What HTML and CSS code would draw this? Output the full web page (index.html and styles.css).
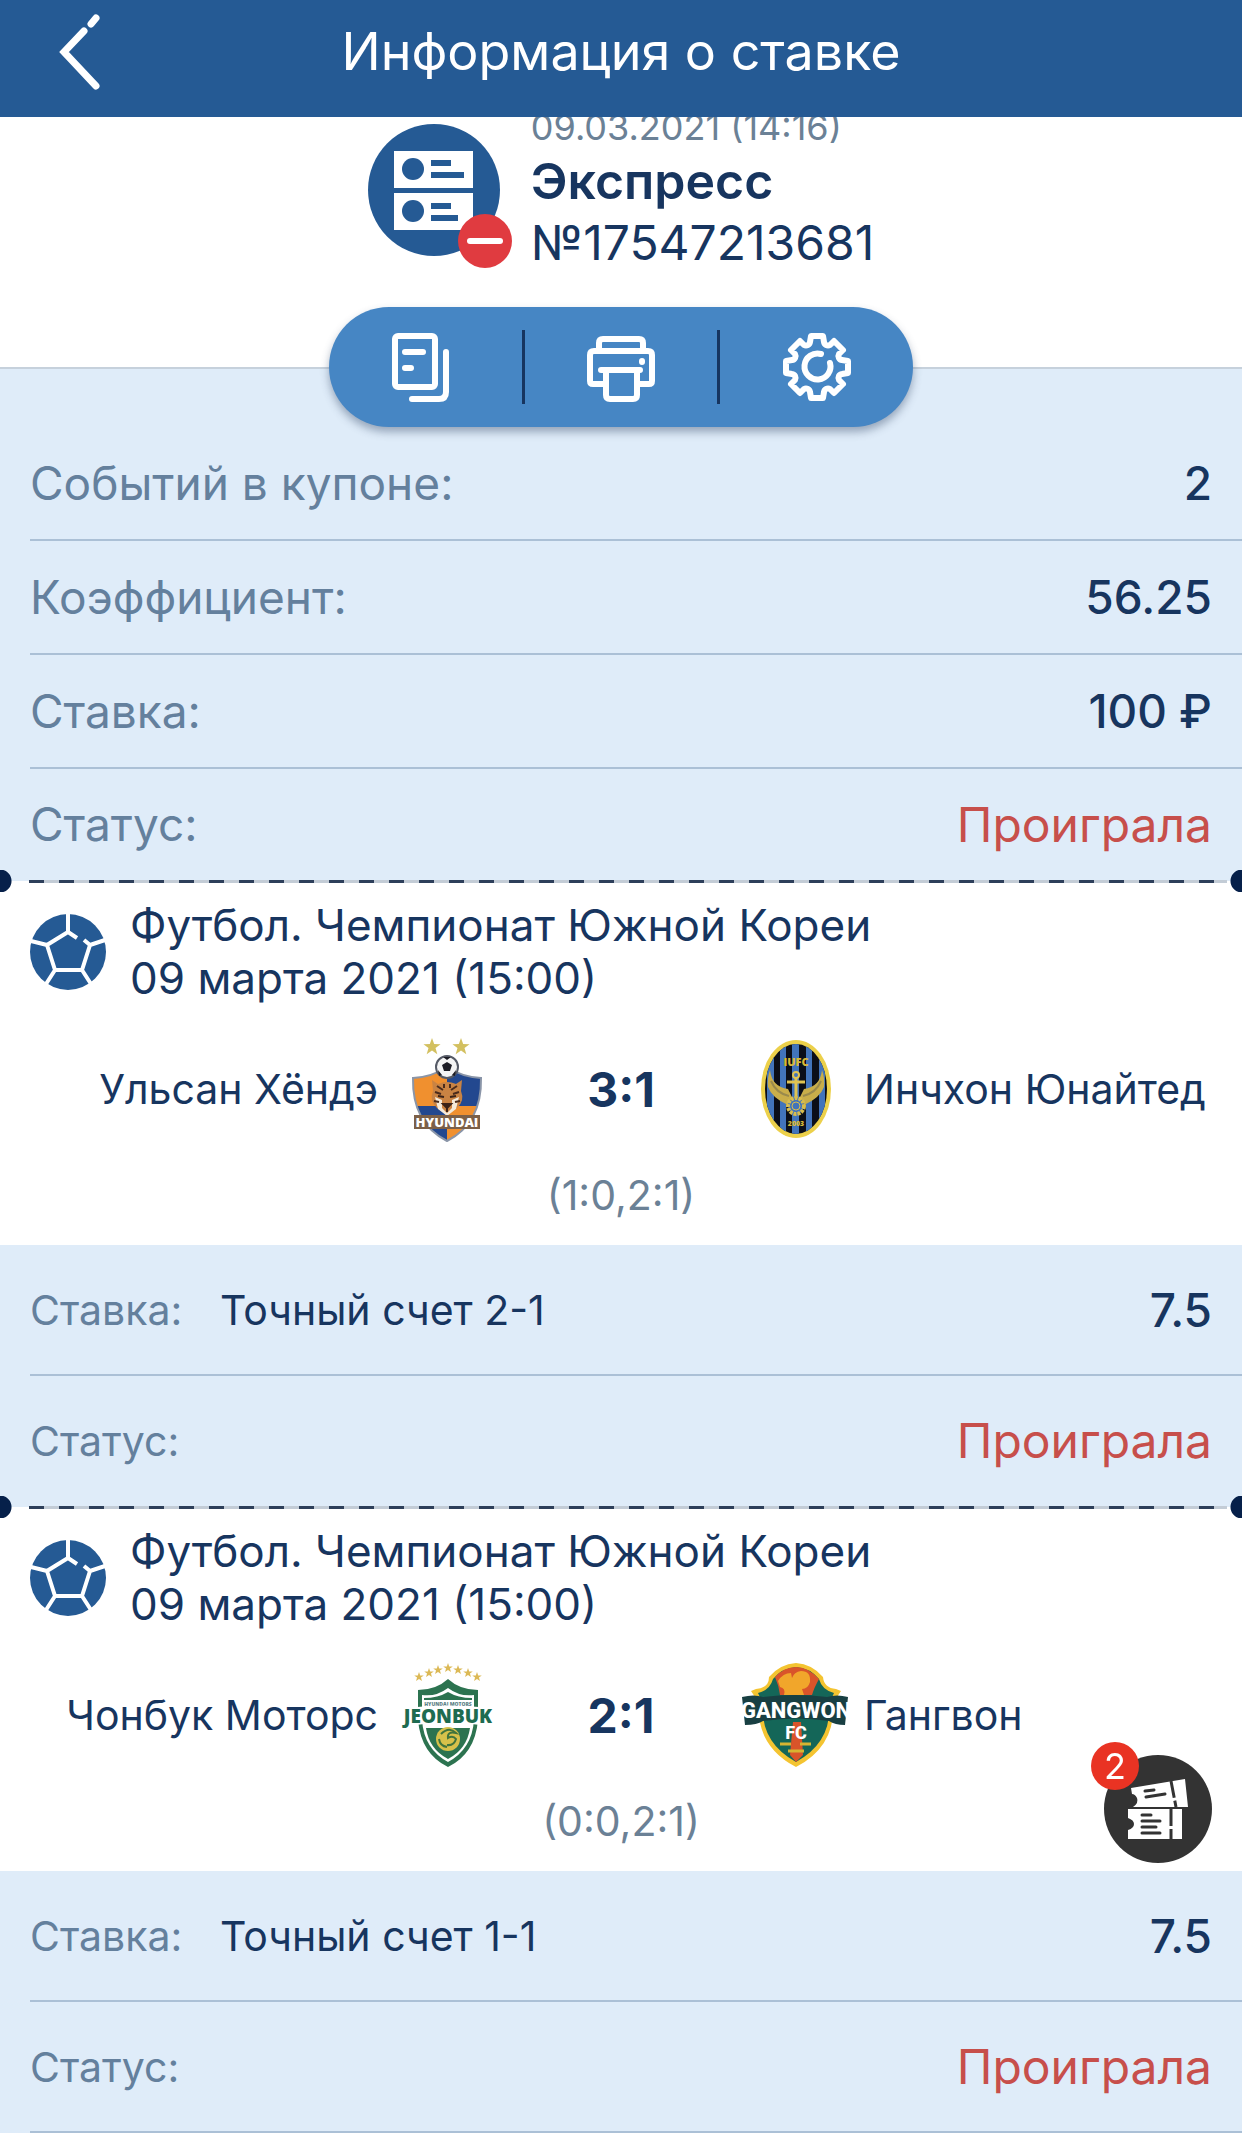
FILE: index.html
```html
<!DOCTYPE html>
<html lang="ru">
<head>
    <meta charset="UTF-8">
    <meta name="viewport" content="width=device-width, initial-scale=1.0">
    <title>Информация о ставке</title>
    <link rel="stylesheet" href="styles.css">
</head>
<body>
    <svg class="sprite" aria-hidden="true">
        <symbol id="ball" viewBox="0 0 76 76">
            <circle cx="38" cy="38" r="38" fill="#255a94"/>
            <g fill="none" stroke="#fff" stroke-width="4">
                <path d="M38 0v18M38 18L17 31l8 25h27l8-25-6-5M38 18l9 6M17 31L1 27M60 31l15-5M25 56L16 70M52 56l9 14"/>
            </g>
        </symbol>
        <symbol id="star" viewBox="-10 -10 20 20">
            <path d="M0-10L2.4-3.2 9.5-3.1 3.9 1.2 5.9 8.1 0 4-5.9 8.1-3.9 1.2-9.5-3.1-2.4-3.2z"/>
        </symbol>
    </svg>

    <header class="header">
        <a href="#" class="back" aria-label="Назад">
            <svg width="44" height="77" viewBox="0 0 44 77" fill="none" stroke="#fff" stroke-width="7" stroke-linecap="round">
                <path d="M39 4l-5 6M27 17L7 38l32 34"/>
            </svg>
        </a>
        <h1>Информация о ставке</h1>
    </header>

    <main>
        <section class="coupon">
            <div class="coupon-info">
                <svg class="coupon-icon" width="145" height="146" viewBox="0 0 145 146">
                    <circle cx="66" cy="66" r="66" fill="#255a94"/>
                    <path d="M26 27h79v37H26zM26 69h79v37H26z" fill="#fff"/>
                    <circle cx="45" cy="45" r="11" fill="#255a94"/>
                    <circle cx="45" cy="87" r="11" fill="#255a94"/>
                    <path d="M63 36h20v6H63zM63 48h33v6H63zM63 79h20v6H63zM63 91h27v6H63z" fill="#255a94"/>
                    <circle cx="117" cy="117" r="27" fill="#e03b40"/>
                    <path d="M102 117h30" stroke="#fff" stroke-width="6" stroke-linecap="round"/>
                </svg>
                <div>
                    <p class="date">09.03.2021 (14:16)</p>
                    <h2>Экспресс</h2>
                    <p class="number">№17547213681</p>
                </div>
            </div>
            <div class="toolbar">
                <button type="button" aria-label="Копировать">
                    <svg width="68" height="70" viewBox="0 0 68 70" fill="none" stroke="#fff" stroke-width="6" stroke-linecap="round" stroke-linejoin="round">
                        <rect x="4" y="4" width="40" height="51" rx="3"/>
                        <path d="M14 20h18M14 36h6M55 20v40q0 7-7 7H21"/>
                    </svg>
                </button>
                <button type="button" aria-label="Печать">
                    <svg width="68" height="70" viewBox="0 0 68 70" fill="none" stroke="#fff" stroke-width="6" stroke-linecap="round" stroke-linejoin="round">
                        <path d="M12 19V11q0-4 4-4h36q4 0 4 4v8M18 52H6q-3 0-3-3V23q0-4 4-4h54q4 0 4 4v26q0 3-3 3H50M14 38h39M19 39v24q0 4 4 4h23q4 0 4-4V39"/>
                        <path d="M55 29v1"/>
                    </svg>
                </button>
                <button type="button" aria-label="Настройки">
                    <svg width="68" height="70" viewBox="-34 -35 68 70" fill="none" stroke="#fff" stroke-width="6" stroke-linecap="round" stroke-linejoin="round">
                        <path d="M-7-25L-6-31H6L7-25A4 4 0 0 0 13-22L17-26 26-17 22-13A4 4 0 0 0 25-7L31-6V6L25 7A4 4 0 0 0 22 13L26 17 17 26 13 22A4 4 0 0 0 7 25L6 31H-6L-7 25A4 4 0 0 0-13 22L-17 26-26 17-22 13A4 4 0 0 0-25 7L-31 6V-6L-25-7A4 4 0 0 0-22-13L-26-17-17-26-13-22A4 4 0 0 0-7-25z"/>
                        <path d="M4-13A13 13 0 1 0 13-4"/>
                    </svg>
                </button>
            </div>
        </section>

        <dl class="summary">
            <div class="row">
                <dt>Событий в купоне:</dt>
                <dd>2</dd>
            </div>
            <div class="row">
                <dt>Коэффициент:</dt>
                <dd>56.25</dd>
            </div>
            <div class="row">
                <dt>Ставка:</dt>
                <dd>100 ₽</dd>
            </div>
            <div class="row">
                <dt>Статус:</dt>
                <dd class="lost">Проиграла</dd>
            </div>
        </dl>

        <hr class="cut">

        <section class="event">
            <div class="event-head">
                <svg width="76" height="76"><use href="#ball"/></svg>
                <p>Футбол. Чемпионат Южной Кореи<br>09 марта 2021 (15:00)</p>
            </div>
            <div class="match">
                <span class="home">Ульсан Хёндэ</span>
                <svg width="110" height="110" viewBox="0 -2 110 110">
                    <g fill="#d3c060">
                        <use href="#star" x="31" y="2" width="18" height="18"/>
                        <use href="#star" x="60" y="2" width="18" height="18"/>
                    </g>
                    <clipPath id="ulsan"><path d="M21 42Q40 41 55 31 70 41 89 42 90 87 55 105 20 87 21 42z"/></clipPath>
                    <g clip-path="url(#ulsan)">
                        <path d="M20 30h35v40H20zM55 70h36v36H55z" fill="#f0902f"/>
                        <path d="M55 30h36v40H55zM20 70h35v36H20z" fill="#23488f"/>
                    </g>
                    <path d="M21 42Q40 41 55 31 70 41 89 42 90 87 55 105 20 87 21 42z" fill="none" stroke="#8a95a8" stroke-width="2"/>
                    <circle cx="55" cy="31" r="11" fill="#f4f4f4" stroke="#555a66" stroke-width="2"/>
                    <path d="M55 26l5 3-2 6h-6l-2-6zM46 34l4 5-3 1zM64 34l-4 5 3 1zM51 21h8l-4 3z" fill="#1c1c24"/>
                    <path d="M40 44l6 4q9-4 18 0l6-4-1 11q4 10-4 17l-10 7-10-7q-8-7-4-17z" fill="#c98343"/>
                    <path d="M43 61l7 3v8l5 5 5-5v-8l7-3-3 12-9 7-9-7z" fill="#f5ead9"/>
                    <path d="M45 50l6 4M65 50l-6 4M43 56l6 2M67 56l-6 2M52 48v4M58 48v4M42 65l5 1M68 65l-5 1" stroke="#4a2b1c" stroke-width="2"/>
                    <path d="M46 60l6 1M64 60l-6 1M51 68h8l-4 4zM55 72v4" stroke="#3b2318" stroke-width="2" fill="#3b2318"/>
                    <path d="M22 79h66v14H22z" fill="#7c6048"/>
                    <text x="55" y="91" class="logo-text" font-size="13" fill="#fff">HYUNDAI</text>
                </svg>
                <strong class="score">3:1</strong>
                <svg width="110" height="110" viewBox="0 -2 110 110">
                    <clipPath id="incheon"><ellipse cx="56" cy="53" rx="31" ry="45"/></clipPath>
                    <ellipse cx="56" cy="53" rx="35" ry="49" fill="#ecd04a"/>
                    <g clip-path="url(#incheon)">
                        <path d="M20 0h72v110H20z" fill="#0b0e18"/>
                        <path d="M27 0h7v110h-7zM40 0h6v110h-6zM52 0h7v110h-7zM66 0h6v110h-6zM79 0h6v110h-6z" fill="#4274bb"/>
                    </g>
                    <path d="M30 34q2 17 18 19l5 10-5 6q-16-7-20-18-1-9 2-17zM82 34q-2 17-18 19l-5 10 5 6q16-7 20-18 1-9-2-17z" fill="#c9ae4a"/>
                    <path d="M31 45q5 12 18 15M81 45q-5 12-18 15" fill="none" stroke="#9a8a4c" stroke-width="2"/>
                    <circle cx="56" cy="39" r="3" fill="none" stroke="#e0c452" stroke-width="2"/>
                    <path d="M56 42v22M47 46h18" stroke="#e0c452" stroke-width="3"/>
                    <circle cx="56" cy="70" r="8" fill="#4274bb" stroke="#d8bd4e" stroke-width="4" stroke-dasharray="3 1"/>
                    <circle cx="56" cy="70" r="4" fill="none" stroke="#d8bd4e"/>
                    <text x="56" y="30" class="logo-text" font-size="11" fill="#d9b936">IUFC</text>
                    <text x="56" y="90" class="logo-text" font-size="7" fill="#d9b936">2003</text>
                </svg>
                <span>Инчхон Юнайтед</span>
            </div>
            <p class="periods">(1:0,2:1)</p>
        </section>

        <dl class="bet">
            <div class="row">
                <dt>Ставка:</dt>
                <dd class="pick">Точный счет 2-1</dd>
                <dd>7.5</dd>
            </div>
            <div class="row">
                <dt>Статус:</dt>
                <dd class="lost">Проиграла</dd>
            </div>
        </dl>

        <hr class="cut">

        <section class="event">
            <div class="event-head">
                <svg width="76" height="76"><use href="#ball"/></svg>
                <p>Футбол. Чемпионат Южной Кореи<br>09 марта 2021 (15:00)</p>
            </div>
            <div class="match">
                <span class="home">Чонбук Моторс</span>
                <svg width="110" height="110" viewBox="0 -2 110 110">
                    <g fill="#dcb956">
                        <use href="#star" x="22" y="10" width="10" height="10"/>
                        <use href="#star" x="32" y="6" width="10" height="10"/>
                        <use href="#star" x="41" y="3" width="10" height="10"/>
                        <use href="#star" x="51" y="1" width="10" height="10"/>
                        <use href="#star" x="61" y="3" width="10" height="10"/>
                        <use href="#star" x="71" y="6" width="10" height="10"/>
                        <use href="#star" x="80" y="10" width="10" height="10"/>
                    </g>
                    <path d="M26 28Q44 28 56 17 68 28 86 28V58Q83 92 56 105 29 92 26 58z" fill="#2c7350"/>
                    <path d="M30 33Q44 35 56 26 68 35 82 33V58Q80 87 56 100 32 87 30 58z" fill="#fff"/>
                    <path d="M32 36Q46 36 56 30 66 36 80 36V38H32z" fill="#2c7350"/>
                    <path d="M34 66h44q-3 21-22 31Q37 87 34 66z" fill="#2c7350"/>
                    <circle cx="56" cy="77" r="12" fill="#d7c14a"/>
                    <path d="M49 72q8-8 15-1-9-2-8 5 5-3 8 1-2 7-9 6M47 77q1 7 8 8" fill="none" stroke="#41743c" stroke-width="2"/>
                    <text x="56" y="44" class="logo-text" font-size="5" fill="#5d8287">HYUNDAI MOTORS</text>
                    <path d="M13 46q43-5 86 0l-5 6 4 12q-42-6-84 0l4-12z" fill="#fff"/>
                    <text x="56" y="61" class="logo-text" font-size="19" fill="#1e6b50">JEONBUK</text>
                </svg>
                <strong class="score">2:1</strong>
                <svg width="110" height="110" viewBox="0 -2 110 110">
                    <path d="M56 1q16 1 27 14 1 11 13 12l5 2-8 12q3 43-37 64-40-21-37-64l-8-12 5-2q13-1 13-12Q40 2 56 1z" fill="#f4c431"/>
                    <path d="M56 5q14 1 23 12 3 11 15 14l-5 11q3 38-33 58-36-20-33-58l-5-11q12-3 15-14Q42 6 56 5z" fill="#146658"/>
                    <path d="M35 15Q44 5 56 5t23 12q-5 9-7 16H40q-1-9-5-18zM53 60h8l2 33-7 7-6-7z" fill="#d9542a"/>
                    <path d="M38 19q5-8 13-8l1 5q2-6 9-7 10 0 9 11-2 7-8 7l2 6H44q2-7-4-8z" fill="#f1a62b"/>
                    <path d="M2 35q12-3 21 0 32-4 64 0 10-3 21 0l-3 28q-10 0-16-4-32-5-66 0-6 4-18 4z" fill="#183f42"/>
                    <text x="56" y="56" class="logo-text gangwon" font-size="22" fill="#fff">GANGWON</text>
                    <text x="56" y="77" class="logo-text gangwon" font-size="18" fill="#fff">FC</text>
                    <path d="M40 82h11M60 82h11M48 89h16" stroke="#d8b431" stroke-width="3"/>
                </svg>
                <span>Гангвон</span>
            </div>
            <p class="periods">(0:0,2:1)</p>
        </section>

        <dl class="bet">
            <div class="row">
                <dt>Ставка:</dt>
                <dd class="pick">Точный счет 1-1</dd>
                <dd>7.5</dd>
            </div>
            <div class="row">
                <dt>Статус:</dt>
                <dd class="lost">Проиграла</dd>
            </div>
        </dl>
    </main>

    <button type="button" class="tickets" aria-label="Купоны">
        <svg width="108" height="108" viewBox="0 0 108 108">
            <circle cx="54" cy="54" r="54" fill="#333"/>
            <path d="M27 33l54-9 3 28H29q6-4 4-9-2-4-5-4zM24 54h54v30H24v-9q6-2 6-6t-6-6z" fill="#fff"/>
            <path d="M67 26l5 26M67 54v30" stroke="#333" stroke-width="3" stroke-dasharray="17 3"/>
            <path d="M41 36l9-1M42 42l19-3M38 60h9M38 66h18M38 72h14M38 78h18" stroke="#333" stroke-width="3" stroke-linecap="round"/>
        </svg>
        <span class="count">2</span>
    </button>
</body>
</html>
```

FILE: styles.css
```css
* {
    box-sizing: border-box;
    margin: 0;
    padding: 0;
}
body {
    background: #dfecf9;
    color: #17355f;
    font-family: Inter, Roboto, sans-serif;
    font-size: 46px;
}
button {
    border: none;
    background: none;
    font-family: inherit;
    cursor: pointer;
}
svg {
    display: block;
    flex: none;
}
.sprite {
    position: absolute;
    width: 0;
    height: 0;
}

/* шапка */
.header {
    position: sticky;
    top: 0;
    z-index: 3;
    display: grid;
    grid-template-columns: 100px 1fr 100px;
    align-items: center;
    height: 117px;
    padding: 0 20px;
    background: #255a94;
    color: #fff;
}
.header h1 {
    font-size: 52px;
    font-weight: 400;
    line-height: 104px;
    padding-bottom: 14px;
    text-align: center;
}
.back {
    padding: 0 0 14px 37px;
}

/* купон */
.coupon {
    display: flex;
    flex-direction: column;
    align-items: center;
    margin-top: -14px;
    background: #fff;
}
.coupon-info {
    display: flex;
    gap: 18px;
    padding-bottom: 32px;
}
.coupon-icon {
    margin-top: 21px;
}
.date {
    color: #6b8196;
    font-size: 36px;
    line-height: 48px;
}
.coupon h2 {
    font-size: 50px;
    font-weight: 600;
    line-height: 60px;
}
.number {
    font-size: 48px;
    line-height: 64px;
}
.toolbar {
    position: relative;
    z-index: 1;
    display: flex;
    align-items: center;
    width: 47%;
    height: 120px;
    margin-bottom: -60px;
    border-radius: 60px;
    background: #4686c4;
    box-shadow: 0 5px 9px rgba(60, 80, 110, 0.45);
}
.toolbar button {
    display: flex;
    flex: 1;
    align-items: center;
    justify-content: center;
    height: 74px;
}
.toolbar button + button {
    border-left: 3px solid #17355f;
}

/* строки */
.summary {
    padding-top: 58px;
    border-top: 2px solid #c6d1dc;
}
.row {
    display: flex;
    align-items: center;
    justify-content: space-between;
    height: 114px;
    margin-left: 30px;
    padding-right: 30px;
    border-bottom: 2px solid #abc0d6;
}
.row:last-child {
    border-bottom-color: transparent;
}
.summary .row:last-child {
    height: 112px;
}
.row dt {
    color: #64809d;
}
.row dd {
    font-weight: 500;
}
.row .lost {
    color: #c74f4b;
    font-size: 48px;
    font-weight: 400;
}
.bet .row {
    height: 131px;
}
.bet:last-child .row {
    border-bottom-color: #abc0d6;
}
.bet dt {
    width: 190px;
    font-size: 41px;
}
.bet .pick {
    flex: 1;
    font-size: 41px;
    font-weight: 400;
}

/* линия отрыва */
.cut {
    position: relative;
    z-index: 1;
    height: 22px;
    margin: -11px 0;
    border: none;
    background:
        radial-gradient(circle at 0 50%, #06204a 11px, transparent 12px),
        radial-gradient(circle at 100% 50%, #06204a 11px, transparent 12px),
        repeating-linear-gradient(to right, #2d3f5a 0 15px, #c3ccd6 15px 30px) 29px 50% / calc(100% - 44px) 3px no-repeat;
}

/* событие */
.event {
    padding: 18px 30px 4px;
    background: #fff;
}
.event-head {
    display: flex;
    align-items: center;
    gap: 24px;
    font-size: 44px;
    line-height: 53px;
}
.match {
    display: grid;
    grid-template-columns: 1fr 138px 210px 138px 1fr;
    align-items: center;
    justify-items: center;
    height: 120px;
    margin: 24px -30px 0;
    font-size: 41px;
}
.match .home {
    justify-self: end;
}
.match span {
    justify-self: start;
}
.score {
    font-size: 48px;
}
.periods {
    color: #6b8196;
    font-size: 41px;
    line-height: 92px;
    text-align: center;
}
.logo-text {
    font-family: "Open Sans", sans-serif;
    font-weight: 800;
    text-anchor: middle;
}
.gangwon {
    font-family: "Liberation Sans Narrow", Roboto, sans-serif;
}

/* кнопка купонов */
.tickets {
    position: fixed;
    right: 30px;
    bottom: 270px;
    z-index: 2;
}
.count {
    position: absolute;
    top: -13px;
    left: -13px;
    width: 48px;
    height: 48px;
    border-radius: 50%;
    background: #e93323;
    color: #fff;
    font-size: 36px;
    line-height: 48px;
}
```
